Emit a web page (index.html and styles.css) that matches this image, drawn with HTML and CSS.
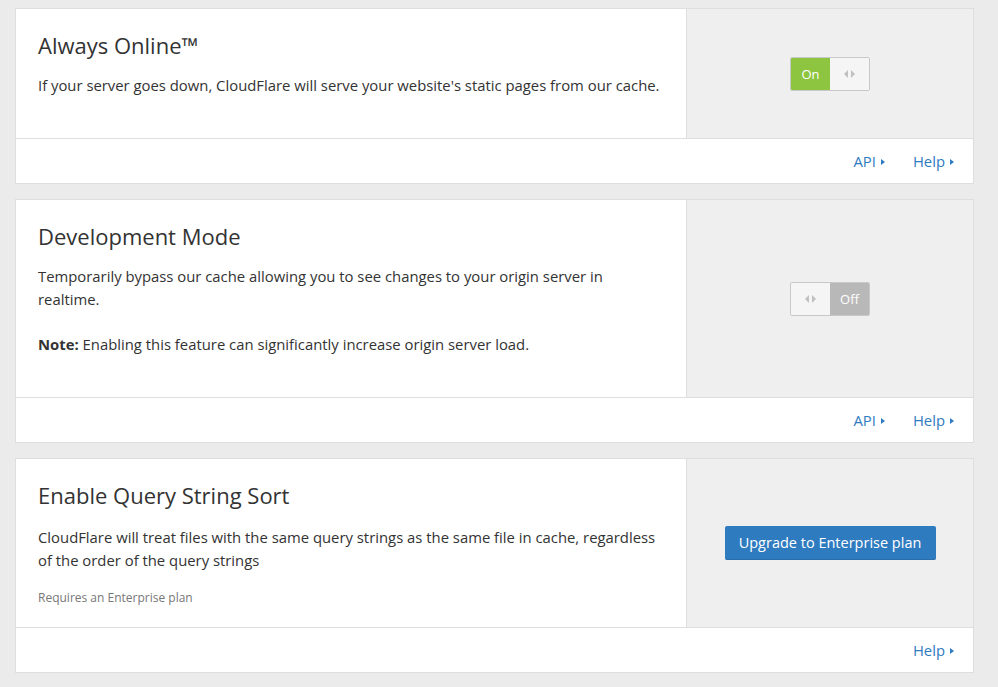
FILE: index.html
```html
<!DOCTYPE html>
<html>
<head>
<meta charset="utf-8">
<link rel="stylesheet" href="styles.css">
</head>
<body>
<div class="page">
  <section class="card">
    <div class="card-main">
      <div class="card-body">
        <h2 class="title">Always Online™</h2>
        <p class="desc">If your server goes down, CloudFlare will serve your website's static pages from our cache.</p>
      </div>
      <div class="card-control">
        <div class="toggle">
          <span class="seg seg-on">On</span>
          <span class="seg seg-knob"><span class="tri tri-l"></span><span class="tri tri-r"></span></span>
        </div>
      </div>
    </div>
    <div class="card-footer">
      <a class="link" href="#">API <span class="caret"></span></a>
      <a class="link" href="#">Help <span class="caret"></span></a>
    </div>
  </section>

  <section class="card">
    <div class="card-main">
      <div class="card-body">
        <h2 class="title">Development Mode</h2>
        <p class="desc">Temporarily bypass our cache allowing you to see changes to your origin server in realtime.</p>
        <p class="desc"><strong>Note:</strong> Enabling this feature can significantly increase origin server load.</p>
      </div>
      <div class="card-control">
        <div class="toggle">
          <span class="seg seg-knob"><span class="tri tri-l"></span><span class="tri tri-r"></span></span>
          <span class="seg seg-off">Off</span>
        </div>
      </div>
    </div>
    <div class="card-footer">
      <a class="link" href="#">API <span class="caret"></span></a>
      <a class="link" href="#">Help <span class="caret"></span></a>
    </div>
  </section>

  <section class="card">
    <div class="card-main">
      <div class="card-body card-body-note">
        <h2 class="title">Enable Query String Sort</h2>
        <p class="desc desc-tight">CloudFlare will treat files with the same query strings as the same file in cache, regardless of the order of the query strings</p>
        <p class="note">Requires an Enterprise plan</p>
      </div>
      <div class="card-control">
        <button class="btn">Upgrade to Enterprise plan</button>
      </div>
    </div>
    <div class="card-footer">
      <a class="link" href="#">Help <span class="caret"></span></a>
    </div>
  </section>
</div>
</body>
</html>
```
FILE: styles.css
```css
* { box-sizing: border-box; }
html, body { margin: 0; padding: 0; }
body {
  background: #ebebeb;
  font-family: "Open Sans", "DejaVu Sans", sans-serif;
  color: #333;
  width: 998px;
  height: 687px;
  overflow: hidden;
}
.page {
  padding: 8px 24px 0 15px;
  display: flex;
  flex-direction: column;
  gap: 15px;
}
.card {
  background: #fff;
  border: 1px solid #dedede;
}
.card-main {
  display: flex;
  border-bottom: 1px solid #dedede;
}
.card-body {
  width: 671px;
  border-right: 1px solid #dedede;
  padding: 23px 20px 19px 22px;
}
.card-body-note { padding-bottom: 20px; }
.card-body-note .title { margin-bottom: 18px; }
.title {
  margin: 0 0 16px 0;
  font-size: 22px;
  font-weight: 400;
  line-height: 26px;
  color: #333;
}
.desc {
  margin: 0 0 22px 0;
  font-size: 14.85px;
  line-height: 23px;
}
.desc:last-child { margin-bottom: 22px; }
.desc-tight { margin-bottom: 17px; }
.note {
  margin: 0;
  font-size: 12px;
  line-height: 18px;
  color: #777;
}
.card-control {
  flex: 1;
  background: #efefef;
  display: flex;
  align-items: center;
  justify-content: center;
}
.toggle {
  display: flex;
  width: 80px;
  height: 34px;
  border: 1px solid #c8c8c8;
  border-radius: 2px;
  overflow: hidden;
}
.seg {
  width: 40px;
  display: flex;
  align-items: center;
  justify-content: center;
  font-size: 13px;
}
.seg-on { background: #8dc540; color: #fff; }
.seg-off { background: #b8b8b8; color: #fff; }
.seg-knob { background: #f5f5f5; gap: 3px; }
.tri {
  width: 0; height: 0;
  border-top: 4px solid transparent;
  border-bottom: 4px solid transparent;
}
.tri-l { border-right: 4px solid #c0c0c0; }
.tri-r { border-left: 4px solid #c0c0c0; }
.btn {
  font-family: "Open Sans", "DejaVu Sans", sans-serif;
  font-size: 14.5px;
  color: #fff;
  background: #2f7bbf;
  border: 0;
  border-bottom: 1px solid #2a6eab;
  border-radius: 2px;
  width: 211px;
  height: 34px;
  padding: 0;
}
.card-footer {
  height: 44px;
  display: flex;
  align-items: center;
  justify-content: flex-end;
  gap: 28px;
  padding-right: 19px;
}
.link {
  color: #2f7bbf;
  text-decoration: none;
  font-size: 14.85px;
  display: flex;
  align-items: center;
  gap: 5px;
}
.caret {
  width: 0; height: 0;
  border-top: 3.5px solid transparent;
  border-bottom: 3.5px solid transparent;
  border-left: 4px solid #2f7bbf;
  margin-top: 2px;
}
```
